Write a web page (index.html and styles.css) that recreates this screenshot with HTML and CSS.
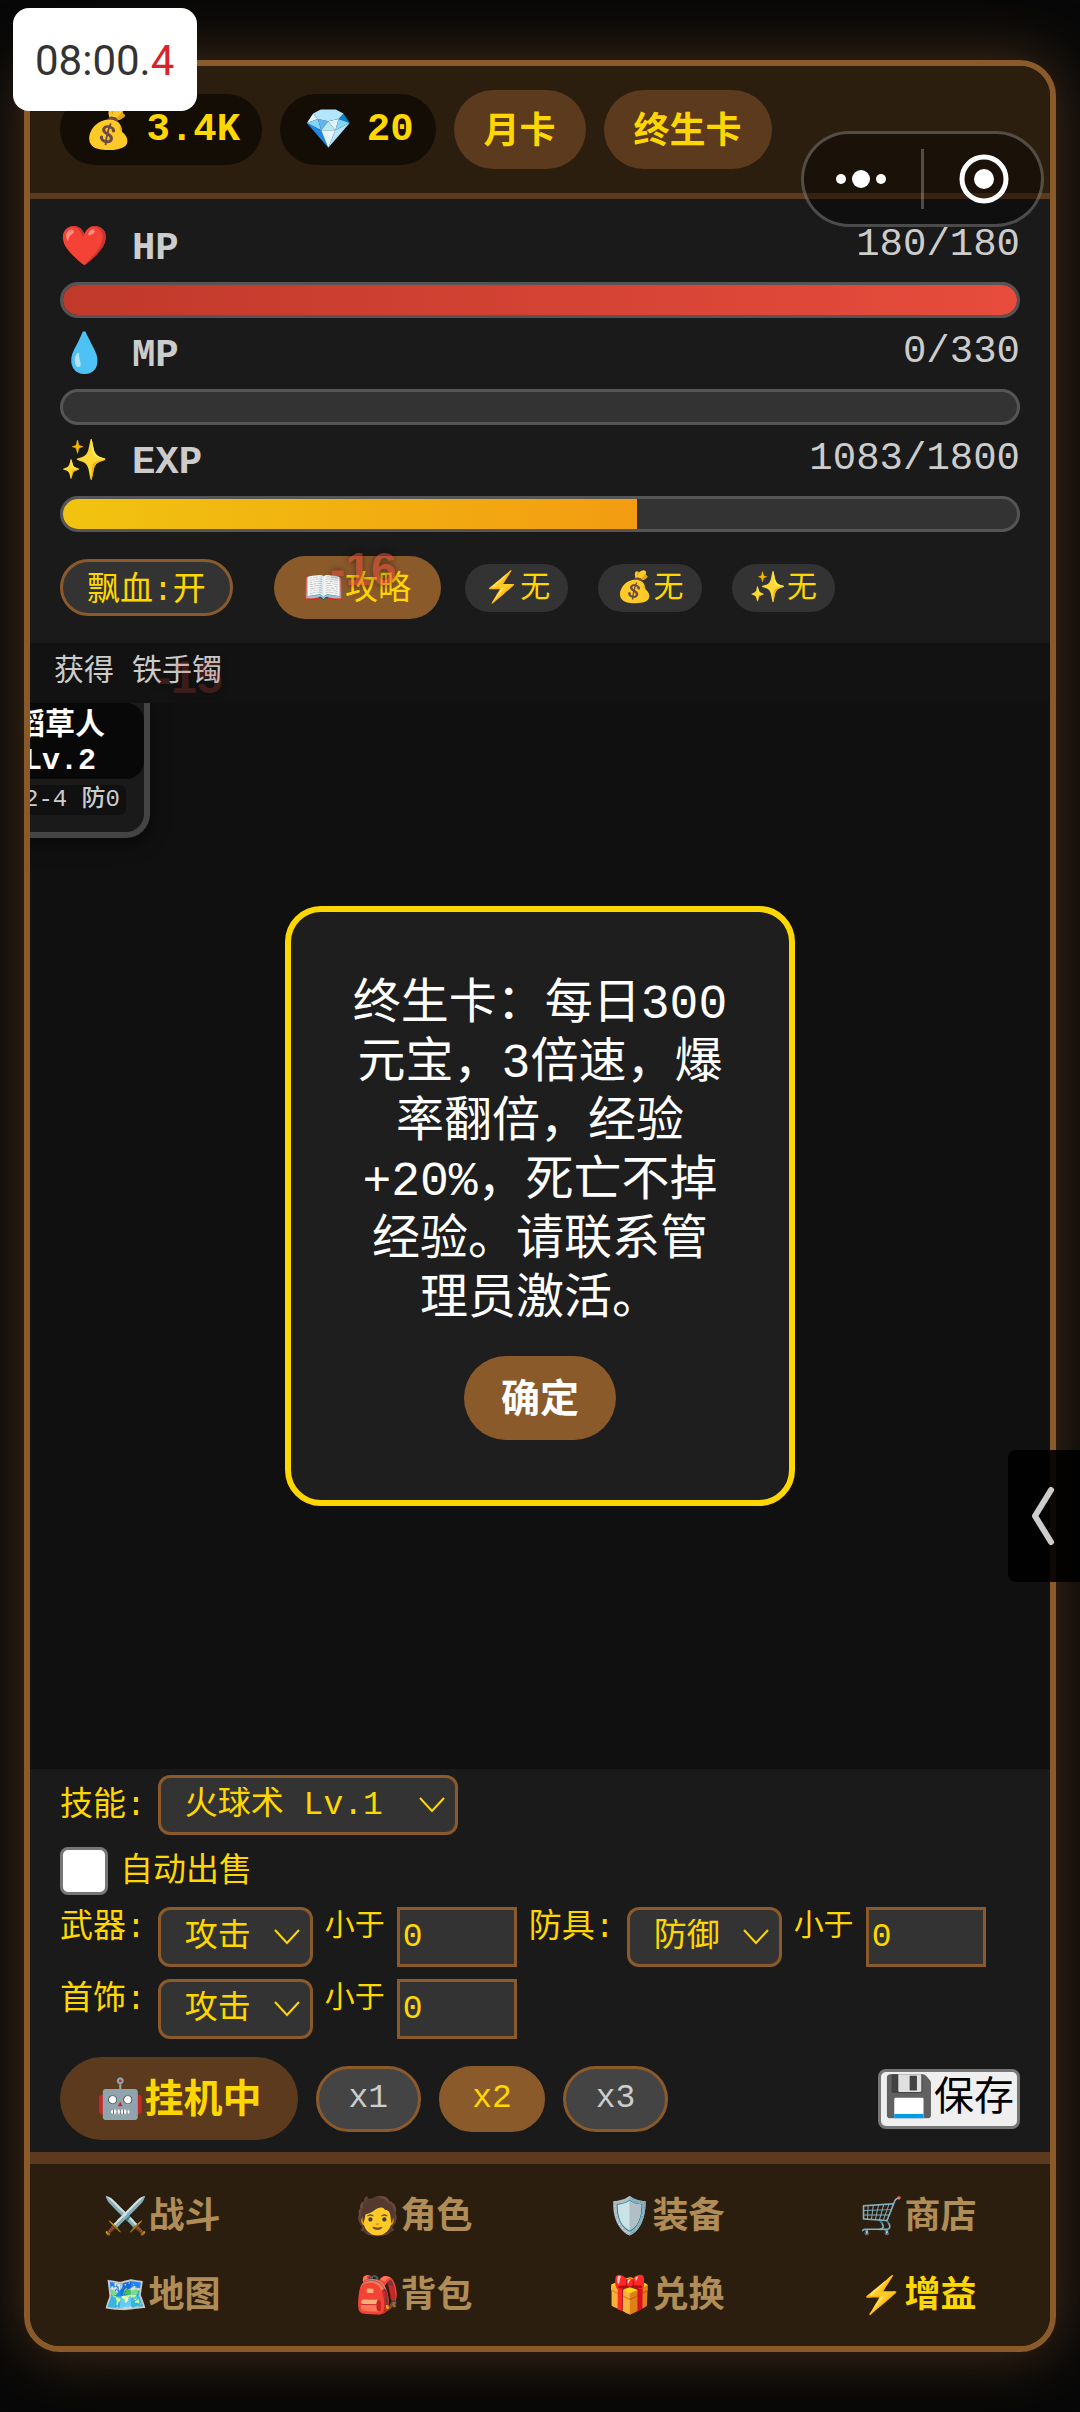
FILE: index.html
```
<!DOCTYPE html>
<html lang="zh-CN">
<head>
    <meta charset="UTF-8">
    <meta name="viewport" content="width=device-width, initial-scale=1.0">
    <title>挂机游戏</title>
    <link rel="stylesheet" href="styles.css">
</head>
<body>
    <div class="game-container">
        <header class="top-bar">
            <div class="resource"><span>💰</span><span>3.4K</span></div>
            <div class="resource"><span>💎</span><span>20</span></div>
            <button class="card-btn">月卡</button>
            <button class="card-btn">终生卡</button>
        </header>

        <section class="status-panel">
            <div class="stat-row">
                <span class="stat-label">❤️ HP</span>
                <span class="stat-value">180/180</span>
            </div>
            <div class="bar"><div class="bar-fill hp" style="width: 100%"></div></div>
            <div class="stat-row">
                <span class="stat-label">💧 MP</span>
                <span class="stat-value">0/330</span>
            </div>
            <div class="bar"><div class="bar-fill mp" style="width: 0%"></div></div>
            <div class="stat-row">
                <span class="stat-label">✨ EXP</span>
                <span class="stat-value">1083/1800</span>
            </div>
            <div class="bar"><div class="bar-fill exp" style="width: 60.17%"></div></div>

            <div class="buff-row">
                <button class="toggle-btn">飘血:开</button>
                <button class="guide-btn">📖攻略</button>
                <div class="buffs">
                    <span class="buff">⚡无</span>
                    <span class="buff">💰无</span>
                    <span class="buff">✨无</span>
                </div>
            </div>
        </section>

        <div class="log">获得 铁手镯</div>

        <main class="battle">
            <div class="monster">
                <div class="monster-name">稻草人<br>Lv.2</div>
                <div class="monster-stats">攻2-4 防0</div>
            </div>
        </main>

        <section class="controls">
            <div class="row row-center">
                <label for="skill">技能:</label>
                <select id="skill" class="skill-select"><option>火球术 Lv.1</option></select>
            </div>
            <div class="row row-center">
                <input type="checkbox" id="auto-sell">
                <label for="auto-sell">自动出售</label>
            </div>
            <div class="row">
                <label for="weapon">武器:</label>
                <select id="weapon"><option>攻击</option></select>
                <label for="weapon-min" class="less">小于</label>
                <input type="text" id="weapon-min" class="num" value="0">
                <label for="armor">防具:</label>
                <select id="armor"><option>防御</option></select>
                <label for="armor-min" class="less">小于</label>
                <input type="text" id="armor-min" class="num" value="0">
            </div>
            <div class="row">
                <label for="jewel">首饰:</label>
                <select id="jewel"><option>攻击</option></select>
                <label for="jewel-min" class="less">小于</label>
                <input type="text" id="jewel-min" class="num" value="0">
            </div>
            <div class="action-row">
                <button class="auto-btn">🤖挂机中</button>
                <button class="speed">x1</button>
                <button class="speed active">x2</button>
                <button class="speed">x3</button>
                <button class="save-btn">💾保存</button>
            </div>
        </section>

        <nav class="bottom-nav">
            <a href="#battle">⚔️战斗</a>
            <a href="#role">🧑角色</a>
            <a href="#equip">🛡️装备</a>
            <a href="#shop">🛒商店</a>
            <a href="#map">🗺️地图</a>
            <a href="#bag">🎒背包</a>
            <a href="#exchange">🎁兑换</a>
            <a href="#buff" class="active">⚡增益</a>
        </nav>
    </div>

    <div class="damage damage-new">-16</div>
    <div class="damage damage-old">-15</div>

    <div class="modal-overlay">
        <div class="modal" role="dialog">
            <p>终生卡：每日300元宝，3倍速，爆率翻倍，经验+20%，死亡不掉经验。请联系管理员激活。</p>
            <button class="modal-btn">确定</button>
        </div>
    </div>

    <div class="clock">08:00.<span>4</span></div>

    <div class="capsule">
        <button aria-label="更多">
            <svg width="60" height="60" viewBox="0 0 60 60" fill="#fff">
                <circle cx="8" cy="30" r="5"/>
                <circle cx="28" cy="30" r="9"/>
                <circle cx="48" cy="30" r="5"/>
            </svg>
        </button>
        <button aria-label="关闭">
            <svg width="60" height="60" viewBox="0 0 60 60">
                <circle cx="31" cy="30" r="22" fill="none" stroke="#fff" stroke-width="5"/>
                <circle cx="31" cy="30" r="10" fill="#fff"/>
            </svg>
        </button>
    </div>

    <button class="side-tab" aria-label="展开">
        <svg width="24" height="60" viewBox="0 0 24 60" fill="none" stroke="#ccc" stroke-width="6" stroke-linecap="round" stroke-linejoin="round">
            <path d="M19 4L3 30L19 56"/>
        </svg>
    </button>
</body>
</html>
```

FILE: styles.css
```
* {
    box-sizing: border-box;
}
body {
    margin: 0;
    padding: 60px 24px;
    height: 100vh;
    background: #080808;
    color: #ffd700;
    font-family: 'Courier New', 'Liberation Mono', 'Noto Sans CJK SC', 'Noto Color Emoji', monospace;
    font-size: 33px;
    overflow: hidden;
}
button,
select,
input {
    margin: 0;
    font-family: inherit;
    color: inherit;
}
button {
    border: none;
    padding: 0;
    white-space: nowrap;
    cursor: pointer;
}
.game-container {
    height: 100%;
    display: flex;
    flex-direction: column;
    border: 6px solid #8b5a2b;
    border-radius: 36px;
    background: #111;
    box-shadow: 0 0 60px rgba(139, 90, 43, 0.5);
    overflow: hidden;
}

/* 顶部资源 */
.top-bar {
    display: flex;
    align-items: center;
    gap: 18px;
    padding: 24px 30px;
    background: #2c1e0f;
    border-bottom: 6px solid #5c3a1e;
}
.resource {
    display: flex;
    align-items: center;
    gap: 14px;
    height: 71px;
    padding: 0 22px 0 24px;
    border-radius: 36px;
    background: #140d05;
    font-size: 39px;
    font-weight: bold;
}
.card-btn {
    height: 79px;
    padding: 0 30px 4px;
    border-radius: 40px;
    background: #5c3a1e;
    font-size: 36px;
    font-weight: bold;
}

/* 状态栏 */
.status-panel {
    padding: 12px 30px 24px;
    background: #1a1a1a;
}
.stat-row {
    display: flex;
    justify-content: space-between;
    height: 71px;
    color: #ccc;
    font-size: 39px;
}
.stat-label {
    line-height: 76px;
    font-weight: bold;
}
.stat-value {
    line-height: 69px;
}
.bar {
    height: 36px;
    border: 3px solid #555;
    border-radius: 18px;
    background: #333;
    overflow: hidden;
}
.bar-fill {
    height: 100%;
}
.bar-fill.hp {
    background: linear-gradient(90deg, #c0392b, #e74c3c);
}
.bar-fill.mp {
    background: linear-gradient(90deg, #2980b9, #3498db);
}
.bar-fill.exp {
    background: linear-gradient(90deg, #f1c40f, #f39c12);
}
.buff-row {
    display: flex;
    align-items: center;
    margin-top: 24px;
}
.toggle-btn {
    height: 57px;
    padding: 0 24px 4px;
    margin-right: 41px;
    border: 3px solid #8b5a2b;
    border-radius: 30px;
    background: #333;
    font-size: 33px;
}
.guide-btn {
    height: 63px;
    padding: 0 30px 6px;
    margin-right: 24px;
    border-radius: 32px;
    background: #8b5a2b;
    font-size: 33px;
}
.buffs {
    display: flex;
    gap: 30px;
}
.buff {
    height: 48px;
    padding: 0 18px;
    border-radius: 24px;
    background: #333;
    font-size: 30px;
    line-height: 50px;
}

/* 战斗区 */
.log {
    padding: 0 24px;
    background: #121212;
    color: #ccc;
    font-size: 30px;
    line-height: 58px;
    height: 60px;
}
.battle {
    flex: 1;
    position: relative;
    overflow: hidden;
    background: #101010;
}
.monster {
    position: absolute;
    left: -60px;
    top: 0;
    width: 180px;
    padding-bottom: 17px;
    display: flex;
    flex-direction: column;
    align-items: center;
    gap: 6px;
    border: 6px solid #444;
    border-top: none;
    border-radius: 0 0 24px 24px;
    background: #1a1a1a;
    box-shadow: 0 6px 18px rgba(0, 0, 0, 0.5);
}
.monster-name {
    align-self: stretch;
    padding: 6px 0 0;
    border-radius: 18px;
    background: #080808;
    color: #fff;
    font-size: 30px;
    font-weight: bold;
    line-height: 35px;
    text-align: center;
}
.monster-stats {
    padding: 0 6px;
    border-radius: 6px;
    background: #101010;
    color: #ccc;
    font-size: 24px;
    font-weight: 500;
    line-height: 30px;
    white-space: nowrap;
}
.damage {
    position: absolute;
    color: #e74c3c;
    font-family: Arial, 'Liberation Sans', sans-serif;
    font-size: 46px;
    font-weight: bold;
    line-height: 48px;
    text-shadow: 0 0 6px #000;
}
.damage-new {
    left: 330px;
    top: 545px;
    opacity: 0.5;
}
.damage-old {
    left: 156px;
    top: 653px;
    opacity: 0.2;
}

/* 控制区 */
.controls {
    display: flex;
    flex-direction: column;
    gap: 12px;
    padding: 6px 30px 12px;
    background: #1a1a1a;
}
.row {
    display: flex;
    gap: 12px;
}
.row-center {
    align-items: center;
}
.controls label {
    line-height: 44px;
}
.controls .less {
    font-size: 30px;
    line-height: 40px;
}
.controls select {
    appearance: none;
    height: 60px;
    padding: 0 59px 0 24px;
    border: 3px solid #8b5a2b;
    border-radius: 12px;
    background: #333 url("data:image/svg+xml,%3Csvg xmlns='http://www.w3.org/2000/svg' width='26' height='16' fill='none' stroke='%23ffd700' stroke-width='2'%3E%3Cpath d='M1 1l12 13L25 1'/%3E%3C/svg%3E") no-repeat right 10px center;
    font-size: 33px;
}
.controls .skill-select {
    min-width: 300px;
}
.controls .num {
    width: 120px;
    height: 60px;
    padding: 0 3px;
    border: 3px solid #8b5a2b;
    border-radius: 0;
    background: #333;
    font-size: 33px;
}
.controls input[type="checkbox"] {
    appearance: none;
    width: 48px;
    height: 48px;
    border: 3px solid #767676;
    border-radius: 8px;
    background: #fff;
}
.row-center label {
    padding-top: 3px;
}
.action-row {
    display: flex;
    align-items: center;
    gap: 18px;
    margin-top: 6px;
}
.auto-btn {
    height: 83px;
    padding: 0 36px 6px;
    border-radius: 42px;
    background: #5c3a1e;
    font-size: 39px;
    font-weight: bold;
}
.speed {
    height: 66px;
    padding: 0 30px;
    border: 3px solid #8b5a2b;
    border-radius: 33px;
    background: #444;
    color: #ccc;
    font-size: 33px;
}
.speed.active {
    background: #8b5a2b;
    color: #ffd700;
}
.save-btn {
    height: 60px;
    margin-left: auto;
    padding: 3px 3px 0;
    border: 3px solid #767676;
    border-radius: 8px;
    background: #efefef;
    color: #000;
    font-size: 40px;
    line-height: 48px;
}

/* 底部导航 */
.bottom-nav {
    display: grid;
    grid-template-columns: repeat(4, 1fr);
    padding: 15px 6px 9px;
    border-top: 12px solid #5c3a1e;
    background: #2c1e0f;
}
.bottom-nav a {
    color: #b08d57;
    font-size: 36px;
    font-weight: bold;
    line-height: 79px;
    text-align: center;
    text-decoration: none;
}
.bottom-nav a.active {
    color: #ffd700;
}

/* 弹窗 */
.modal-overlay {
    position: fixed;
    inset: 0;
    display: flex;
    align-items: center;
    justify-content: center;
}
.modal {
    width: 510px;
    padding: 64px 60px 60px;
    border: 6px solid #ffd700;
    border-radius: 36px;
    background: #1e1e1e;
    color: #fff;
    text-align: center;
}
.modal p {
    margin: 0 0 26px;
    font-size: 48px;
    line-height: 59px;
}
.modal-btn {
    height: 84px;
    padding: 0 37px 6px;
    border-radius: 42px;
    background: #8b5a2b;
    font-size: 39px;
    font-weight: bold;
}

/* 悬浮层 */
.clock {
    position: fixed;
    left: 13px;
    top: 8px;
    padding: 2px 23px 0 22px;
    border-radius: 16px;
    background: #fff;
    color: #333;
    font-family: Roboto, sans-serif;
    font-size: 42px;
    line-height: 101px;
}
.clock span {
    color: #d8232a;
}
.capsule {
    position: fixed;
    right: 36px;
    top: 131px;
    width: 243px;
    height: 96px;
    display: flex;
    align-items: center;
    border: 3px solid rgba(255, 255, 255, 0.25);
    border-radius: 48px;
    background: rgba(0, 0, 0, 0.4);
}
.capsule button {
    flex: 1;
    height: 60px;
    background: none;
}
.capsule button + button {
    border-left: 3px solid rgba(255, 255, 255, 0.25);
}
.capsule svg {
    display: block;
    margin: 0 auto;
}
.side-tab {
    position: fixed;
    right: 0;
    top: 1450px;
    width: 72px;
    height: 132px;
    border-radius: 8px 0 0 8px;
    background: rgba(0, 0, 0, 0.9);
}
.side-tab svg {
    display: block;
    margin: 0 auto;
}
```
